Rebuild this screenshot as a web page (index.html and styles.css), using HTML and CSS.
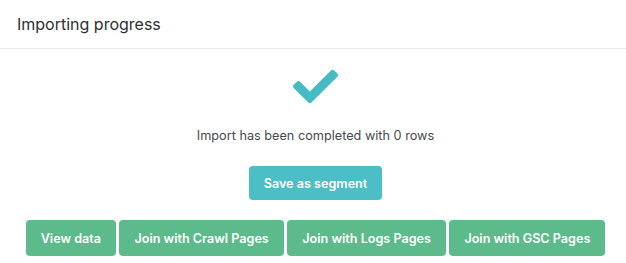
FILE: index.html
```html
<!DOCTYPE html>
<html>
<head>
<meta charset="utf-8">
<link rel="stylesheet" href="styles.css">
</head>
<body>
<div class="modal">
  <div class="header">Importing progress</div>
  <div class="content">
    <svg class="check" viewBox="0 0 512 512" width="45" height="45"><path fill="#45bbc3" d="M173.898 439.404l-166.4-166.4c-9.997-9.997-9.997-26.206 0-36.204l36.203-36.204c9.997-9.998 26.207-9.998 36.204 0L192 312.69 432.095 72.596c9.997-9.997 26.207-9.997 36.204 0l36.203 36.204c9.997 9.997 9.997 26.206 0 36.204l-294.4 294.401c-9.998 9.997-26.207 9.997-36.204-.001z"/></svg>
    <div class="msg">Import has been completed with 0 rows</div>
    <button class="btn btn-teal">Save as segment</button>
    <div class="row">
      <button class="btn btn-green">View data</button>
      <button class="btn btn-green">Join with Crawl Pages</button>
      <button class="btn btn-green">Join with Logs Pages</button>
      <button class="btn btn-green">Join with GSC Pages</button>
    </div>
  </div>
</div>
</body>
</html>
```
FILE: styles.css
```css
html, body { margin: 0; padding: 0; background: #fff; }
body { font-family: Inter, "Noto Sans", sans-serif; }
.modal { width: 626px; }
.header {
  height: 49px;
  box-sizing: border-box;
  border-bottom: 1px solid #eeeeee;
  padding: 0 17px;
  display: flex;
  align-items: center;
  font-size: 16px;
  color: #2b2f33;
  padding-bottom: 1px;
}
.content {
  display: flex;
  flex-direction: column;
  align-items: center;
  padding-left: 5px;
}
.check { display: block; margin-top: 15px; }
.msg {
  margin-top: 18px;
  font-size: 12.7px;
  line-height: 18px;
  color: #444a50;
}
.btn {
  font-family: Inter, "Noto Sans", sans-serif;
  font-weight: 600;
  font-size: 12.6px;
  color: #fff;
  border: none;
  border-radius: 4px;
  padding: 0 15px;
  cursor: pointer;
}
.btn-teal {
  margin-top: 21px;
  height: 34px;
  padding: 0 15px;
  background: #4bbec6;
}
.row {
  display: flex;
  gap: 3.5px;
  margin-top: 20px;
}
.btn-green {
  height: 36px;
  background: #5cba8b;
}
```
